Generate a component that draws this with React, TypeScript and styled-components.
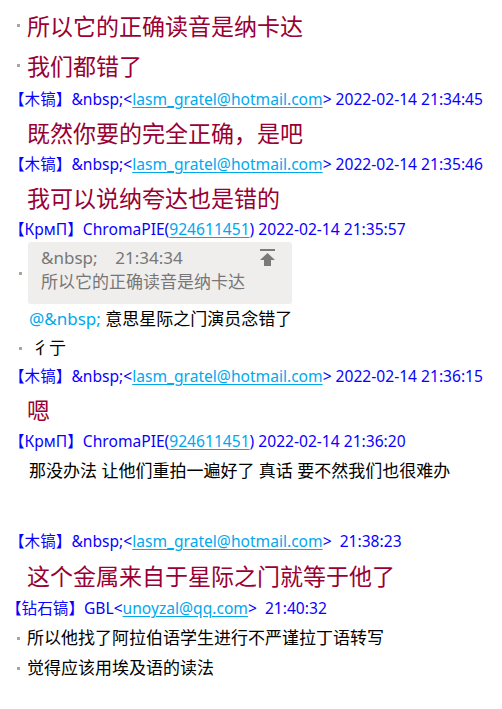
import React from "react";
import styled, { createGlobalStyle } from "styled-components";

const GlobalStyle = createGlobalStyle`
  html, body {
    margin: 0;
    padding: 0;
    background: #ffffff;
  }
  body {
    font-family: "Noto Sans", "Noto Sans CJK SC", sans-serif;
  }
`;

const Log = styled.div`
  width: 502px;
  padding-top: 5px;
  display: flex;
  flex-direction: column;
`;

const Row = styled.div<{ $h?: number; $indent?: number; $mt?: number }>`
  display: grid;
  grid-template-columns: ${({ $indent }) => $indent ?? 27}px 1fr;
  align-items: center;
  min-height: ${({ $h }) => $h ?? 30}px;
  margin-top: ${({ $mt }) => $mt ?? 0}px;
`;

const MetaRow = styled.div<{ $indent?: number }>`
  height: 29px;
  display: flex;
  align-items: center;
  padding-left: ${({ $indent }) => $indent ?? 9}px;
`;

const Marker = styled.span<{ $left?: number }>`
  grid-column: 1;
  justify-self: start;
  width: 3px;
  height: 3px;
  margin-left: ${({ $left }) => $left ?? 17}px;
  background: #a3a8a3;
`;

const Body = styled.div`
  grid-column: 2;
  white-space: pre;
`;

const Shout = styled(Body)`
  font-family: "Noto Sans CJK SC", sans-serif;
  font-size: 23px;
  line-height: 1;
  color: #990033;
`;

const Plain = styled(Body)`
  font-family: "Noto Sans", "Noto Sans CJK SC", sans-serif;
  font-size: 17px;
  line-height: 1.2;
  color: #000000;
`;

const Meta = styled.div`
  font-family: "Noto Sans", "Noto Sans CJK SC", sans-serif;
  font-size: 15.6px;
  line-height: 1.2;
  color: #0a00ff;
  white-space: pre;
`;

const Link = styled.span`
  color: #00a8ec;
  text-decoration: underline;
  text-underline-offset: 2px;
`;

const Mention = styled.span`
  color: #00a8ec;
`;

const Spacer = styled.div<{ $h: number }>`
  height: ${({ $h }) => $h}px;
`;

const QuoteBox = styled.div`
  grid-column: 2;
  width: 264px;
  box-sizing: border-box;
  display: flex;
  justify-content: space-between;
  align-items: flex-start;
  padding: 4px 17px 10px 13px;
  background: #efeeec;
  border-radius: 3px;
`;

const QuoteText = styled.div`
  font-family: "Noto Sans", "Noto Sans CJK SC", sans-serif;
  font-size: 17px;
  line-height: 24px;
  color: #777777;
  white-space: pre;
`;

const ToTop = styled.svg`
  margin-top: 3px;
  flex-shrink: 0;
  fill: #7a7a7a;
`;

const TopIcon = () => (
  <ToTop width="15" height="17" viewBox="0 0 15 17">
    <rect x="0" y="0" width="15" height="2" />
    <path d="M7.5 4 L15 11 H11 V17 H4 V11 H0 Z" />
  </ToTop>
);

const NBSP = "&nbsp;";

const Header = ({
  who,
  pre,
  link,
  post,
  indent,
}: {
  who: string;
  pre: string;
  link: string;
  post: string;
  indent?: number;
}) => (
  <MetaRow $indent={indent}>
    <Meta>
      {who}
      {pre}
      <Link>{link}</Link>
      {post}
    </Meta>
  </MetaRow>
);

const App = () => {
  return (
    <>
      <GlobalStyle />
      <Log>
        <Row $h={40}>
          <Marker />
          <Shout>所以它的正确读音是纳卡达</Shout>
        </Row>
        <Row $h={40}>
          <Marker />
          <Shout>我们都错了</Shout>
        </Row>

        <Header who="【木镐】" pre={NBSP + "<"} link="lasm_gratel@hotmail.com" post="> 2022-02-14 21:34:45" />
        <Row $h={36}>
          <Shout>既然你要的完全正确，是吧</Shout>
        </Row>

        <Header who="【木镐】" pre={NBSP + "<"} link="lasm_gratel@hotmail.com" post="> 2022-02-14 21:35:46" />
        <Row $h={36}>
          <Shout>我可以说纳夸达也是错的</Shout>
        </Row>

        <Header who="【КрмП】" pre="ChromaPIE(" link="924611451" post=") 2022-02-14 21:35:57" />
        <Row $indent={28} $h={62} $mt={-2}>
          <Marker $left={19} />
          <QuoteBox>
            <QuoteText>
              {NBSP + "    21:34:34\n所以它的正确读音是纳卡达"}
            </QuoteText>
            <TopIcon />
          </QuoteBox>
        </Row>
        <Row $indent={29} $h={30}>
          <Plain>
            <Mention>@{NBSP}</Mention> 意思星际之门演员念错了
          </Plain>
        </Row>
        <Row $indent={32} $h={28}>
          <Marker $left={19} />
          <Plain>彳亍</Plain>
        </Row>

        <Header who="【木镐】" pre={NBSP + "<"} link="lasm_gratel@hotmail.com" post="> 2022-02-14 21:36:15" />
        <Row $h={36}>
          <Shout>嗯</Shout>
        </Row>

        <Header who="【КрмП】" pre="ChromaPIE(" link="924611451" post=") 2022-02-14 21:36:20" />
        <Row $indent={29}>
          <Plain>那没办法 让他们重拍一遍好了 真话 要不然我们也很难办</Plain>
        </Row>

        <Spacer $h={41} />

        <Header who="【木镐】" pre={NBSP + "<"} link="lasm_gratel@hotmail.com" post=">  21:38:23" />
        <Row $h={38}>
          <Shout>这个金属来自于星际之门就等于他了</Shout>
        </Row>

        <Header who="【钻石镐】" pre="GBL<" link="unoyzal@qq.com" post=">  21:40:32" indent={6} />
        <Row>
          <Marker />
          <Plain>所以他找了阿拉伯语学生进行不严谨拉丁语转写</Plain>
        </Row>
        <Row>
          <Marker />
          <Plain>觉得应该用埃及语的读法</Plain>
        </Row>
      </Log>
    </>
  );
};

export default App;
